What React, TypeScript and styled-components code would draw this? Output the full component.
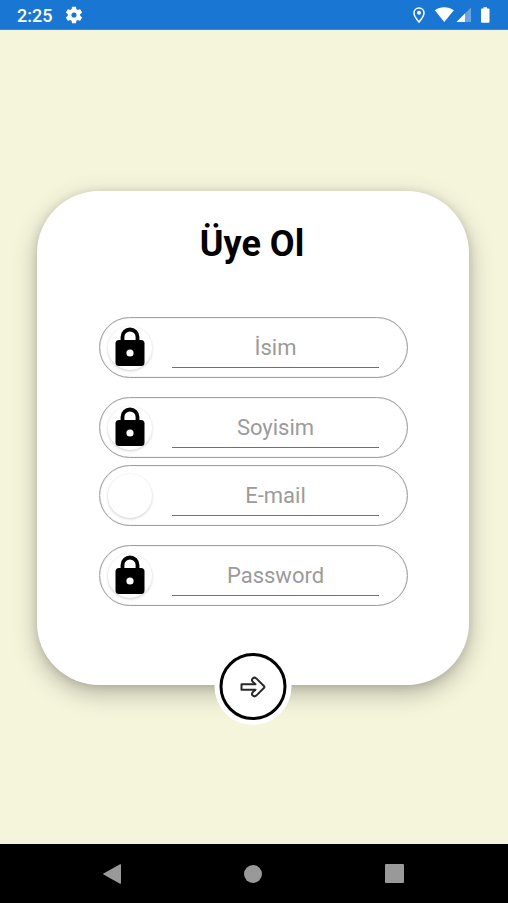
import React from "react";
import styled, { createGlobalStyle } from "styled-components";

const GlobalStyle = createGlobalStyle`
  *, *::before, *::after { box-sizing: border-box; }
  body { margin: 0; font-family: Roboto, sans-serif; background: #f5f5dc; }
  button, input { font: inherit; }
`;

const Screen = styled.div`
  min-height: 100vh;
  display: flex;
  flex-direction: column;
  background: #f5f5dc;
`;

const StatusBar = styled.header`
  height: 30px;
  padding: 0 18px 0 17px;
  display: flex;
  align-items: center;
  justify-content: space-between;
  background: #1976d2;
  border-bottom: 1px solid #3d88ce;
  color: #fff;
`;

const StatusGroup = styled.div`
  display: flex;
  align-items: center;
  gap: 13px;

  svg { display: block; }
`;

const Clock = styled.time`
  font-size: 18px;
  line-height: 20px;
  font-weight: 500;
  padding-top: 2px;
`;

const Main = styled.main`
  flex: 1;
  display: flex;
  flex-direction: column;
  justify-content: center;
  padding: 2px 39px 0 37px;
`;

const Card = styled.form`
  position: relative;
  display: flex;
  flex-direction: column;
  padding: 31px 61px 79px 62px;
  border-radius: 62px;
  background: #fff;
  box-shadow: 0 8px 24px rgba(0, 0, 0, 0.26), 0 2px 10px rgba(0, 0, 0, 0.12);
`;

const Title = styled.h1`
  margin: 0 0 51px;
  padding-right: 3px;
  font-size: 36px;
  line-height: 44px;
  font-weight: 700;
  text-align: center;
  color: #000;
`;

const FieldGroups = styled.div`
  display: flex;
  flex-direction: column;
  gap: 7px;
`;

const FieldGroup = styled.div`
  display: flex;
  flex-direction: column;
  gap: 19px;
`;

const FieldRow = styled.label`
  height: 61px;
  display: flex;
  align-items: center;
  gap: 20px;
  padding: 0 28px 0 8px;
  border: 1px solid #a0a0a0;
  box-shadow: inset 0 0 1px #a0a0a0;
  border-radius: 31px;
`;

const Badge = styled.span`
  flex: none;
  width: 44px;
  height: 44px;
  display: grid;
  place-items: center;
  border-radius: 50%;
  background: #fff;
  box-shadow: 0 1px 3px rgba(0, 0, 0, 0.2);

  svg { display: block; }
`;

const TextBox = styled.input`
  flex: 1;
  min-width: 0;
  height: 40px;
  padding: 0;
  border: 0;
  border-bottom: 1px solid #707070;
  border-radius: 0;
  outline: none;
  background: transparent;
  color: #222;
  font-size: 22px;
  line-height: 26px;
  text-align: center;

  &::placeholder { color: #9b9b9b; opacity: 1; }
`;

const SubmitButton = styled.button`
  position: absolute;
  left: 50%;
  bottom: -40px;
  transform: translateX(-50%);
  width: 77px;
  height: 77px;
  padding: 5px;
  border: 0;
  border-radius: 50%;
  background: #fff;
  cursor: pointer;
`;

const Ring = styled.span`
  width: 100%;
  height: 100%;
  display: grid;
  place-items: center;
  border: 3px solid #000;
  border-radius: 50%;
`;

const NavBar = styled.nav`
  height: 59px;
  padding: 0 43px 0 41px;
  display: grid;
  grid-template-columns: repeat(3, 1fr);
  background: #000;
`;

const NavButton = styled.button`
  display: grid;
  place-items: center;
  padding: 0;
  border: 0;
  background: transparent;
  cursor: pointer;
`;

const GearIcon = () => (
  <svg width="18" height="18" viewBox="1.5 1.5 21 21" fill="#fff" aria-hidden="true">
    <path d="M19.14 12.94c.04-.3.06-.61.06-.94 0-.32-.02-.64-.07-.94l2.03-1.58a.49.49 0 0 0 .12-.61l-1.92-3.32a.49.49 0 0 0-.59-.22l-2.39.96a7 7 0 0 0-1.62-.94l-.36-2.54a.48.48 0 0 0-.48-.41h-3.84a.48.48 0 0 0-.47.41l-.36 2.54c-.59.24-1.13.57-1.62.94l-2.39-.96a.48.48 0 0 0-.59.22L2.74 8.87a.48.48 0 0 0 .12.61l2.03 1.58c-.05.3-.09.63-.09.94s.02.64.07.94l-2.03 1.58a.49.49 0 0 0-.12.61l1.92 3.32c.12.22.37.29.59.22l2.39-.96c.5.38 1.03.7 1.62.94l.36 2.54c.05.24.24.41.48.41h3.84c.24 0 .44-.17.47-.41l.36-2.54a7 7 0 0 0 1.62-.94l2.39.96c.22.08.47 0 .59-.22l1.92-3.32a.48.48 0 0 0-.12-.61zM12 15a3 3 0 1 1 0-6 3 3 0 0 1 0 6z" />
  </svg>
);

const StatusIcons = () => (
  <svg width="78" height="18" viewBox="0 0 78 18" fill="#fff" aria-hidden="true">
    <path d="M7 2C4 2 2 4.300 2 7c0 3.300 5 9 5 9s5-5.700 5-9c0-2.700-2-5-5-5z" fill="none" stroke="#fff" strokeWidth="1.500" />
    <circle cx="7" cy="6.800" r="2" />
    <path d="M32.300 16 22.800 4.300C28 .3 36.500 .3 41.800 4.300z" />
    <path d="M59 1.500V16H44.500z" opacity=".35" />
    <path d="M53 7.500V16h-8.500z" />
    <path d="M70 2.500h1.500V1.200h3.500v1.300h1.500q1 0 1 1v12.300q0 1-1 1H70q-1 0-1-1V3.500q0-1 1-1z" />
  </svg>
);

const LockIcon = () => (
  <svg width="32" height="42" viewBox="0 0 32 42" aria-hidden="true">
    <path d="M8.500 15V10a7.500 7.500 0 0 1 15 0v5" fill="none" stroke="#000" strokeWidth="3.800" />
    <rect x="1.500" y="13" width="29" height="26" rx="3.500" />
    <circle cx="16" cy="26" r="3.600" fill="#fff" />
  </svg>
);

const ArrowIcon = () => (
  <svg width="27" height="22" viewBox="0 0 27 22" fill="none" stroke="#2a2a2a" strokeWidth="2" strokeLinejoin="round" aria-hidden="true">
    <path d="M2 8.300H16L13 5.500Q11.800 4 13.200 2.400 15 .9 16.800 2.400L24.600 10.200Q25.200 11 24.600 11.800L16.800 19.600Q15 21.100 13.200 19.600 11.800 18 13 16.500L16 13.700H2Z" />
  </svg>
);

interface FieldProps {
  name: string;
  placeholder: string;
  type?: string;
  locked?: boolean;
}

const Field = ({ name, placeholder, type = "text", locked = true }: FieldProps) => (
  <FieldRow>
    <Badge>{locked && <LockIcon />}</Badge>
    <TextBox name={name} type={type} placeholder={placeholder} aria-label={placeholder} />
  </FieldRow>
);

export default function App() {
  return (
    <Screen>
      <GlobalStyle />
      <StatusBar>
        <StatusGroup>
          <Clock>2:25</Clock>
          <GearIcon />
        </StatusGroup>
        <StatusIcons />
      </StatusBar>
      <Main>
        <Card onSubmit={(e) => e.preventDefault()}>
          <Title>Üye Ol</Title>
          <FieldGroups>
            <FieldGroup>
              <Field name="firstName" placeholder="İsim" />
              <Field name="lastName" placeholder="Soyisim" />
            </FieldGroup>
            <FieldGroup>
              <Field name="email" type="email" placeholder="E-mail" locked={false} />
              <Field name="password" type="password" placeholder="Password" />
            </FieldGroup>
          </FieldGroups>
          <SubmitButton type="submit" aria-label="Üye Ol">
            <Ring>
              <ArrowIcon />
            </Ring>
          </SubmitButton>
        </Card>
      </Main>
      <NavBar>
        <NavButton type="button" aria-label="Back">
          <svg width="18" height="20" viewBox="0 0 18 20" fill="#999" aria-hidden="true">
            <path d="M17 .300q1-.3 1 .7v18q0 1-1 .7L.500 10.500q-.6-.5 0-1z" />
          </svg>
        </NavButton>
        <NavButton type="button" aria-label="Home">
          <svg width="18" height="18" viewBox="0 0 18 18" fill="#999" aria-hidden="true">
            <circle cx="9" cy="9" r="9" />
          </svg>
        </NavButton>
        <NavButton type="button" aria-label="Recent apps">
          <svg width="19" height="19" viewBox="0 0 19 19" fill="#999" aria-hidden="true">
            <rect width="19" height="19" rx="1" />
          </svg>
        </NavButton>
      </NavBar>
    </Screen>
  );
}
